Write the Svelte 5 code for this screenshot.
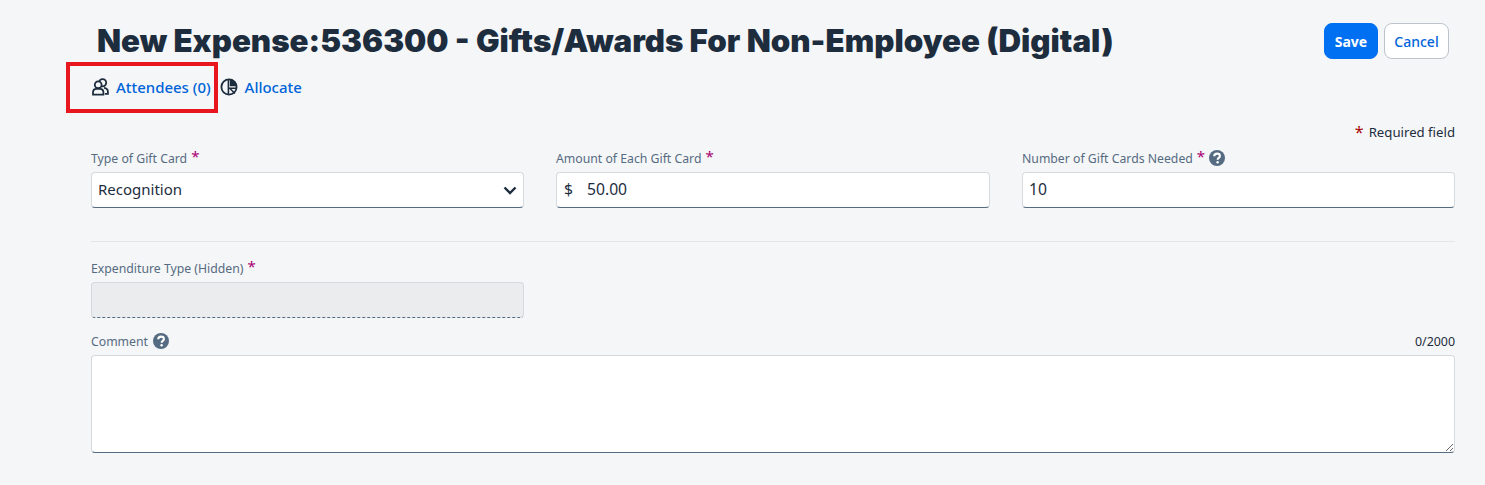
<script>
  const fields = [
    { label: 'Type of Gift Card', required: true },
    { label: 'Amount of Each Gift Card', required: true },
    { label: 'Number of Gift Cards Needed', required: true, help: true }
  ];
</script>

{#snippet help()}
  <svg class="help" viewBox="0 0 16 16" aria-hidden="true">
    <circle cx="8" cy="8" r="8" fill="#556b82" />
    <path d="M5.2 6.2C5.3 4.6 6.5 3.6 8.1 3.6c1.6 0 2.8 1 2.8 2.4 0 1-.6 1.6-1.4 2.1-.6 .4-.8 .7-.8 1.3v.4" fill="none" stroke="#fff" stroke-width="2.1" />
    <circle cx="8.6" cy="12.2" r="1.25" fill="#fff" />
  </svg>
{/snippet}

{#snippet label(f)}
  <div class="label">
    <span>{f.label}</span>
    {#if f.required}<span class="star">*</span>{/if}
    {#if f.help}{@render help()}{/if}
  </div>
{/snippet}

<div class="page">
  <header class="top">
    <h1>New Expense:536300 - Gifts/Awards For Non-Employee (Digital)</h1>
    <div class="actions">
      <button class="btn primary">Save</button>
      <button class="btn ghost">Cancel</button>
    </div>
  </header>

  <nav class="links">
    <a href="#attendees" class="link attendees">
      <svg viewBox="0 0 18 18" aria-hidden="true">
        <circle cx="11.6" cy="4.8" r="3.6" fill="none" stroke="#1d2d3e" stroke-width="1.8" />
        <path d="M13 9.8c2.4 .2 3.9 1.7 3.9 3.9v2.2h-3" fill="none" stroke="#1d2d3e" stroke-width="1.8" />
        <circle cx="7.2" cy="6.8" r="3.4" fill="#f5f6f7" stroke="#1d2d3e" stroke-width="1.8" />
        <path d="M2 16.6v-2.4c0-2 1.6-3.4 3.6-3.4h3.2c2 0 3.6 1.4 3.6 3.4v2.4z" fill="#f5f6f7" stroke="#1d2d3e" stroke-width="1.8" />
      </svg>
      Attendees (0)
    </a>
    <a href="#allocate" class="link">
      <svg viewBox="0 0 18 18" aria-hidden="true">
        <circle cx="9" cy="9" r="7.6" fill="none" stroke="#1d2d3e" stroke-width="1.8" />
        <path d="M8.4 1v16" stroke="#1d2d3e" stroke-width="1.6" />
        <path d="M9.8 1a8 8 0 0 1 7.2 7.2H9.8z" fill="#1d2d3e" />
        <path d="M9 10.2h7.6M10 10.4l4.8 5" fill="none" stroke="#1d2d3e" stroke-width="1.5" />
      </svg>
      Allocate
    </a>
  </nav>

  <div class="required"><span class="star dark">*</span>Required field</div>

  <div class="row">
    <div class="field">
      {@render label(fields[0])}
      <div class="control">
        <span class="value">Recognition</span>
        <svg class="chevron" viewBox="0 0 14 9" aria-hidden="true">
          <path d="M1.5 1.5L7 7l5.5-5.5" fill="none" stroke="#1d2d3e" stroke-width="2.4" />
        </svg>
      </div>
    </div>
    <div class="field">
      {@render label(fields[1])}
      <div class="control">
        <span class="prefix num">$</span>
        <span class="value num">50.00</span>
      </div>
    </div>
    <div class="field">
      {@render label(fields[2])}
      <div class="control">
        <span class="value num">10</span>
      </div>
    </div>
  </div>

  <hr />

  <div class="row">
    <div class="field">
      {@render label({ label: 'Expenditure Type (Hidden)', required: true })}
      <div class="control disabled"></div>
    </div>
  </div>

  <div class="comment">
    <div class="comment-head">
      <div class="label">
        <span>Comment</span>
        {@render help()}
      </div>
      <span class="count">0/2000</span>
    </div>
    <textarea aria-label="Comment"></textarea>
  </div>

  <div class="highlight"></div>
</div>

<style>
  :global(body) {
    margin: 0;
    background: #f5f6f7;
  }

  .page {
    position: relative;
    box-sizing: border-box;
    width: 1485px;
    height: 485px;
    padding: 0 30px 0 91px;
    font-family: "Noto Sans", "Open Sans", sans-serif;
    color: #1d2d3e;
    overflow: hidden;
  }

  .top {
    display: flex;
    align-items: center;
    justify-content: space-between;
    height: 59px;
    padding: 23px 6px 0 6px;
    box-sizing: border-box;
  }

  h1 {
    margin: 0;
    font-family: Inter, "Noto Sans", sans-serif;
    font-size: 31.3px;
    font-weight: 900;
    line-height: 36px;
    white-space: nowrap;
    color: #1d2d3e;
  }

  .actions {
    display: flex;
    gap: 6px;
  }

  .btn {
    height: 36px;
    border-radius: 8px;
    font-family: inherit;
    font-size: 14px;
    padding: 0;
    cursor: pointer;
  }

  .primary {
    width: 54px;
    background: #0070f2;
    border: 1px solid #0070f2;
    color: #fff;
    font-weight: 700;
  }

  .ghost {
    width: 65px;
    background: #fff;
    border: 1px solid #bcc3ca;
    color: #0064d9;
    font-weight: 500;
  }

  .links {
    display: flex;
    align-items: center;
    gap: 9px;
    height: 20px;
    margin-top: 18px;
  }

  .link {
    display: flex;
    align-items: center;
    gap: 7px;
    color: #0064d9;
    font-size: 14.95px;
    font-weight: 500;
    text-decoration: none;
    line-height: 20px;
  }

  .link svg {
    width: 18px;
    height: 18px;
  }

  .required {
    display: flex;
    justify-content: flex-end;
    align-items: center;
    gap: 5px;
    margin-top: 26px;
    margin-bottom: 8px;
    height: 18px;
    font-size: 13.2px;
    line-height: 18px;
    color: #1d2d3e;
  }

  .star {
    color: #aa0808;
    font-size: 16px;
    line-height: 12px;
  }

  .row {
    display: grid;
    grid-template-columns: 433px 434px 433px;
    column-gap: 32px;
  }

  .label {
    display: flex;
    align-items: center;
    gap: 4px;
    height: 18px;
    font-size: 12.25px;
    color: #556b82;
    white-space: nowrap;
  }

  .label .star {
    color: #aa0073;
    font-size: 15px;
    margin-right: -1px;
    position: relative;
    top: -2px;
  }

  .help {
    width: 16px;
    height: 16px;
    margin-left: 1px;
  }

  .field .control {
    margin-top: 5px;
  }

  .control {
    display: flex;
    align-items: center;
    justify-content: space-between;
    box-sizing: border-box;
    height: 36px;
    padding: 0 6px 2px;
    background: #fff;
    border: 1px solid #d5dadd;
    border-bottom: 1px solid #556b82;
    border-radius: 4px;
    font-size: 15px;
    color: #1d2d3e;
  }

  .control .prefix {
    width: 23px;
    margin-left: 1px;
  }

  .control .prefix + .value {
    flex: 1;
  }

  .num {
    font-size: 15.7px;
  }

  .chevron {
    width: 14px;
    height: 9px;
    margin-top: 2px;
  }

  .disabled {
    background: #eaecee;
    border-color: #d5dadd;
    border-bottom: 1px dashed #556b82;
  }

  hr {
    margin: 33px 0 17px;
    border: 0;
    border-top: 1px solid #e5e5e5;
  }

  .comment {
    margin-top: 14px;
  }

  .comment-head {
    display: flex;
    align-items: center;
    justify-content: space-between;
    height: 18px;
  }

  .count {
    font-size: 12.4px;
  }

  textarea {
    display: block;
    box-sizing: border-box;
    width: 100%;
    height: 98px;
    margin-top: 5px;
    background: #fff;
    border: 1px solid #d5dadd;
    border-bottom: 1px solid #556b82;
    border-radius: 4px;
    outline: none;
  }

  /* annotation drawn on top of the screenshot */
  .highlight {
    position: absolute;
    left: 66px;
    top: 62px;
    width: 144px;
    height: 43px;
    border: 4px solid #e8171f;
  }
</style>
